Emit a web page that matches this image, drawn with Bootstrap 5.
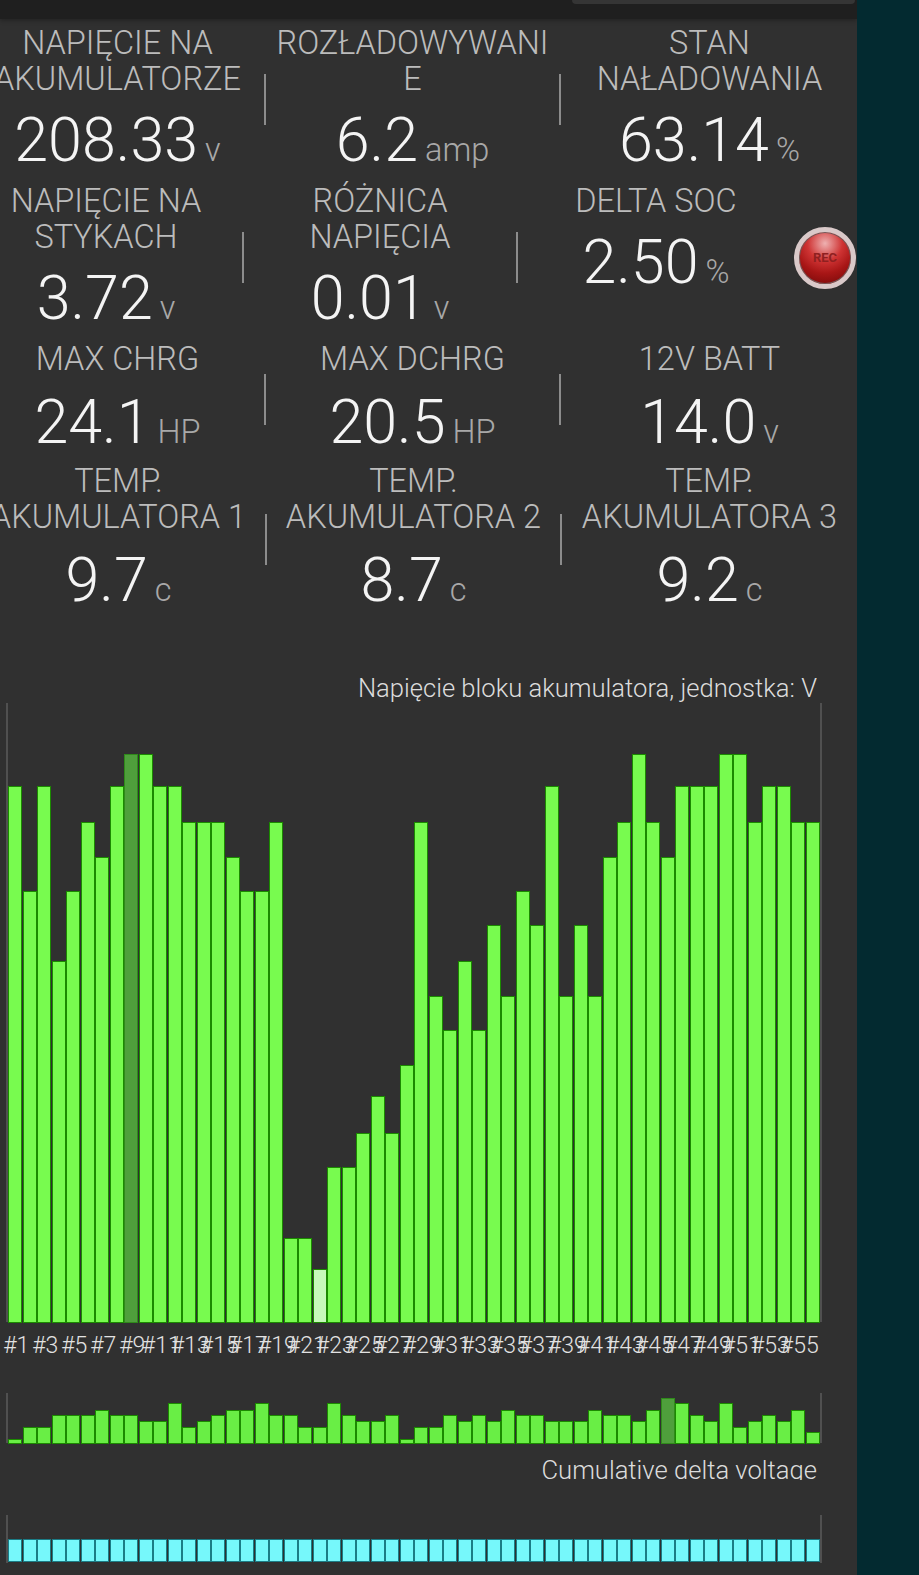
<!DOCTYPE html>
<html lang="pl">
<head>
    <meta charset="UTF-8">
    <title>BMS</title>
    <link href="https://cdn.jsdelivr.net/npm/bootstrap@5.3.0/dist/css/bootstrap.min.css" rel="stylesheet">
    <style>
        body {
            background: #032a30;
            font-family: Roboto, "Liberation Sans", sans-serif;
            height: 1575px;
            overflow: hidden;
        }

        .panel-main {
            width: 857px;
            height: 1575px;
            background: #303030;
            overflow: hidden;
        }

        .top-strip {
            height: 19px;
            background: #1f1f1f;
            box-shadow: 0 2px 4px rgba(0, 0, 0, .25);
        }

        .top-pill {
            width: 283px;
            height: 4px;
            margin-left: 572px;
            background: #353535;
            border-radius: 0 0 8px 8px;
        }

        .stats {
            padding-top: 6px;
            height: 606px;
        }

        .stat-row {
            display: grid;
            grid-template-columns: repeat(3, 295px);
            margin-left: -29px;
        }

        .stat-row > .d-flex:last-child {
            padding-left: 2px;
        }

        .stat-row.narrow {
            grid-template-columns: repeat(3, 274px);
            margin-left: -30px;
        }

        .stat-row.tall .stat-value {
            line-height: 90px;
        }

        .stat-row.shifted {
            margin-left: -28px;
            margin-top: -4px;
        }

        .stat-row.shifted > .d-flex:last-child {
            padding-left: 0;
        }

        .stat-label {
            font-size: 32.5px;
            font-weight: 300;
            line-height: 36px;
            color: #bcbcbc;
            white-space: nowrap;
        }

        .stat-value {
            font-size: 61px;
            font-weight: 300;
            line-height: 86px;
            color: #f4f4f4;
            white-space: nowrap;
        }

        .stat-unit {
            font-size: 32.5px;
            line-height: 1;
            margin-left: 7px;
            color: #a8a8a8;
        }

        .stat-sep {
            flex: 0 0 2px;
            height: 51px;
            margin-top: -10px;
            background: #8c8c8c;
        }

        .chart-title {
            width: 817px;
            font-size: 25.6px;
            font-weight: 300;
            color: #dcdcdc;
            text-align: right;
            white-space: nowrap;
            overflow: hidden;
        }

        .plot {
            width: 816px;
            margin-left: 6px;
            display: grid;
            grid-template-columns: repeat(56, 14.5px);
            align-items: end;
            justify-content: start;
            border-left: 2px solid #505050;
            border-right: 2px solid #505050;
        }

        .plot-big { height: 619px; }
        .plot-small { height: 50px; }
        .plot-delta { height: 48px; padding-bottom: 2px; }

        .cell-bar {
            width: 12px;
            margin: 0 auto;
            background: #78fb4f;
            box-shadow: 0 0 0 1px #1b8a00;
        }

        .plot-small .cell-bar { background: #69ee45; }

        .cell-bar.is-max { background: #4f9f3c; box-shadow: 0 0 0 1px #2f8a1a; }
        .cell-bar.is-min { background: #c6f9ba; }

        .cell-bar.is-cyan {
            height: 21px;
            background: #76f8fb;
            box-shadow: 0 0 0 1px #1b7c86;
        }

        .ticks {
            width: 812px;
            height: 71px;
            margin-left: 9px;
            display: grid;
            grid-template-columns: repeat(56, 14.5px);
        }

        .tick {
            display: flex;
            justify-content: center;
            font-size: 23px;
            font-weight: 300;
            line-height: 48px;
            color: #e2e2e2;
            white-space: nowrap;
        }

        .rec-btn {
            top: 227px;
            left: 794px;
            width: 62px;
            height: 62px;
            font-size: 13px;
            font-weight: 700;
            color: #8f2020;
            border: 5px solid #d9c9c9;
            background: radial-gradient(circle at 50% 22%, #eeb1b1 0, #cf3434 36%, #a81616 62%, #6d0606 100%);
            box-shadow: inset 0 0 0 1px #6f5a5a;
        }
    </style>
</head>
<body>
    <div class="panel-main position-relative">
        <div class="top-strip"><div class="top-pill"></div></div>

        <div class="stats">
            <div class="stat-row">
                <div class="d-flex">
                    <div class="flex-grow-1 text-center"><div class="stat-label">NAPIĘCIE NA<br>AKUMULATORZE</div><div class="stat-value">208.33<span class="stat-unit">v</span></div></div>
                    <div class="stat-sep align-self-center"></div>
                </div>
                <div class="d-flex">
                    <div class="flex-grow-1 text-center"><div class="stat-label">ROZŁADOWYWANI<br>E</div><div class="stat-value">6.2<span class="stat-unit">amp</span></div></div>
                    <div class="stat-sep align-self-center"></div>
                </div>
                <div class="d-flex">
                    <div class="flex-grow-1 text-center"><div class="stat-label">STAN<br>NAŁADOWANIA</div><div class="stat-value">63.14<span class="stat-unit">%</span></div></div>
                </div>
            </div>

            <div class="stat-row narrow">
                <div class="d-flex">
                    <div class="flex-grow-1 text-center"><div class="stat-label">NAPIĘCIE NA<br>STYKACH</div><div class="stat-value">3.72<span class="stat-unit">v</span></div></div>
                    <div class="stat-sep align-self-center"></div>
                </div>
                <div class="d-flex">
                    <div class="flex-grow-1 text-center"><div class="stat-label">RÓŻNICA<br>NAPIĘCIA</div><div class="stat-value">0.01<span class="stat-unit">v</span></div></div>
                    <div class="stat-sep align-self-center"></div>
                </div>
                <div class="d-flex">
                    <div class="flex-grow-1 text-center"><div class="stat-label">DELTA SOC</div><div class="stat-value">2.50<span class="stat-unit">%</span></div></div>
                </div>
            </div>

            <div class="stat-row tall">
                <div class="d-flex">
                    <div class="flex-grow-1 text-center"><div class="stat-label">MAX CHRG</div><div class="stat-value">24.1<span class="stat-unit">HP</span></div></div>
                    <div class="stat-sep align-self-center"></div>
                </div>
                <div class="d-flex">
                    <div class="flex-grow-1 text-center"><div class="stat-label">MAX DCHRG</div><div class="stat-value">20.5<span class="stat-unit">HP</span></div></div>
                    <div class="stat-sep align-self-center"></div>
                </div>
                <div class="d-flex">
                    <div class="flex-grow-1 text-center"><div class="stat-label">12V BATT</div><div class="stat-value">14.0<span class="stat-unit">v</span></div></div>
                </div>
            </div>

            <div class="stat-row tall shifted">
                <div class="d-flex">
                    <div class="flex-grow-1 text-center"><div class="stat-label">TEMP.<br>AKUMULATORA 1</div><div class="stat-value">9.7<span class="stat-unit">c</span></div></div>
                    <div class="stat-sep align-self-center"></div>
                </div>
                <div class="d-flex">
                    <div class="flex-grow-1 text-center"><div class="stat-label">TEMP.<br>AKUMULATORA 2</div><div class="stat-value">8.7<span class="stat-unit">c</span></div></div>
                    <div class="stat-sep align-self-center"></div>
                </div>
                <div class="d-flex">
                    <div class="flex-grow-1 text-center"><div class="stat-label">TEMP.<br>AKUMULATORA 3</div><div class="stat-value">9.2<span class="stat-unit">c</span></div></div>
                </div>
            </div>
        </div>

        <div class="rec-btn position-absolute rounded-circle d-flex align-items-center justify-content-center">REC</div>

        <div class="chart-title" style="height: 78px; line-height: 126px;">Napięcie bloku akumulatora, jednostka: V</div>
        <div id="plotBig" class="plot plot-big"></div>
        <div id="ticks" class="ticks"></div>
        <div id="plotSmall" class="plot plot-small"></div>
        <div class="chart-title" style="height: 37px; line-height: 54px;">Cumulative delta voltage</div>
        <div class="pt-0" style="height: 35px;"></div>
        <div id="plotDelta" class="plot plot-delta"></div>
    </div>

    <script src="https://cdn.jsdelivr.net/npm/bootstrap@5.3.0/dist/js/bootstrap.bundle.min.js"></script>
    <script>
        // bar height for each level, read off the big chart (base is at y 1322)
        const levelTops = [755,787,823,858,892,926,962,997,1031,1066,1097,1134,1168,1202,1239,1270];
        const levels = [1,4,1,6,4,2,3,1,0,0,1,1,2,2,2,3,4,4,2,14,14,15,12,12,11,10,11,9,
                        2,7,8,6,8,5,7,4,5,1,7,5,7,3,2,0,2,3,1,1,1,0,0,2,1,1,2,2];
        // tops read off the small chart, in px above its base
        const small = [3,15,15,27,27,27,32,27,27,21,21,39,15,21,27,32,32,39,27,27,15,15,39,27,21,21,27,3,
                       15,15,27,21,27,21,32,27,27,21,21,21,32,27,27,21,32,44,39,27,21,39,15,21,27,21,32,10];

        const fill = (id, build) => {
            const host = document.getElementById(id);
            for (let i = 0; i < 56; i++) {
                host.appendChild(build(i));
            }
        };

        const makeBar = (height, extra) => {
            const bar = document.createElement('div');
            bar.className = 'cell-bar ' + extra;
            if (height) bar.style.height = height + 'px';
            return bar;
        };

        fill('plotBig', i => makeBar(1322 - levelTops[levels[i]], i === 8 ? 'is-max' : i === 21 ? 'is-min' : ''));
        fill('plotSmall', i => makeBar(small[i], i === 45 ? 'is-max' : ''));
        fill('plotDelta', () => makeBar(0, 'is-cyan'));

        fill('ticks', i => {
            const tick = document.createElement('div');
            tick.className = 'tick';
            if (i % 2 === 0) tick.textContent = '#' + (i + 1);
            return tick;
        });
    </script>
</body>
</html>
